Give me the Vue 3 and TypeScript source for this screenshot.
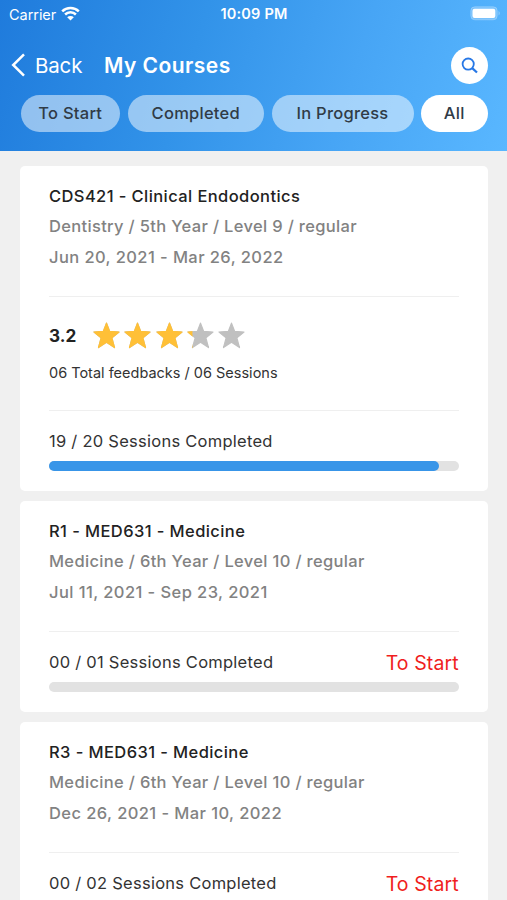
<script setup lang="ts">
interface Course {
  title: string
  meta: string
  dates: string
  rating?: number
  feedback?: string
  sessions: string
  progress: number
  status?: string
}

const filters = [
  { label: 'To Start', kind: 'start' },
  { label: 'Completed', kind: 'completed' },
  { label: 'In Progress', kind: 'progress' },
  { label: 'All', kind: 'all' },
]

const courses: Course[] = [
  {
    title: 'CDS421 - Clinical Endodontics',
    meta: 'Dentistry / 5th Year / Level 9 / regular',
    dates: 'Jun 20, 2021 - Mar 26, 2022',
    rating: 3.2,
    feedback: '06 Total feedbacks / 06 Sessions',
    sessions: '19 / 20 Sessions Completed',
    progress: 95,
  },
  {
    title: 'R1 - MED631 - Medicine',
    meta: 'Medicine / 6th Year / Level 10 / regular',
    dates: 'Jul 11, 2021 - Sep 23, 2021',
    sessions: '00 / 01 Sessions Completed',
    progress: 0,
    status: 'To Start',
  },
  {
    title: 'R3 - MED631 - Medicine',
    meta: 'Medicine / 6th Year / Level 10 / regular',
    dates: 'Dec 26, 2021 - Mar 10, 2022',
    sessions: '00 / 02 Sessions Completed',
    progress: 0,
    status: 'To Start',
  },
]

const starPath =
  'M13.5 1.1 L16.6 9.3 L26 10 L18.9 15.9 L21.5 25.6 L13.5 20.3 L5.5 25.6 L8.1 15.9 L1 10 L10.4 9.3 Z'

function starFill(rating: number, n: number): number {
  return Math.max(0, Math.min(1, rating - n + 1)) * 27
}
</script>

<template>
  <div class="screen">
    <header class="header">
      <div class="status">
        <div class="carrier">
          <span>Carrier</span>
          <svg class="wifi" width="19" height="15" viewBox="0 0 19 15">
            <path d="M1.2 5.4 A11.8 11.8 0 0 1 17.8 5.4" />
            <path d="M4.1 8.5 A7.6 7.6 0 0 1 14.9 8.5" />
            <path class="solid" d="M9.5 14.6 L6.2 11.3 A4.7 4.7 0 0 1 12.8 11.3 Z" />
          </svg>
        </div>
        <span class="clock">10:09 PM</span>
        <svg class="battery" width="31" height="15" viewBox="0 0 31 15">
          <rect x="0.8" y="0.8" width="26.4" height="13" rx="4" class="shell" />
          <rect x="2.5" y="2.7" width="22.8" height="9.4" rx="2" fill="#fff" />
          <path d="M28.6 5 Q30.8 7.2 28.6 9.6 Z" fill="#fff" fill-opacity="0.4" />
        </svg>
      </div>
      <nav class="navbar">
        <svg class="chevron" width="16" height="26" viewBox="0 0 16 26">
          <path d="M14 2.3 L3.2 13 L14 23.7" />
        </svg>
        <span class="back">Back</span>
        <h1 class="heading">My Courses</h1>
        <button class="search" aria-label="Search">
          <svg width="18" height="18" viewBox="0 0 18 18">
            <circle cx="7.2" cy="7.1" r="5.6" />
            <path d="M11.2 11.2 L16 15.5" class="handle" />
          </svg>
        </button>
      </nav>
      <div class="filters">
        <button v-for="f in filters" :key="f.kind" class="chip" :class="f.kind">{{ f.label }}</button>
      </div>
    </header>

    <main class="list">
      <article v-for="c in courses" :key="c.title" class="card">
        <h2 class="title">{{ c.title }}</h2>
        <p class="meta">{{ c.meta }}</p>
        <p class="dates">{{ c.dates }}</p>
        <section v-if="c.rating" class="feedback">
          <div class="rating">
            <span class="score">{{ c.rating }}</span>
            <svg v-for="n in 5" :key="n" class="star" width="27" height="27" viewBox="0 0 27 27">
              <clipPath :id="'fill-' + n">
                <rect x="0" y="0" :width="starFill(c.rating, n)" height="27" />
              </clipPath>
              <path :d="starPath" class="empty" />
              <path :d="starPath" class="full" :clip-path="'url(#fill-' + n + ')'" />
            </svg>
          </div>
          <p class="total">{{ c.feedback }}</p>
        </section>
        <div class="sessions">
          <span class="count">{{ c.sessions }}</span>
          <span v-if="c.status" class="state">{{ c.status }}</span>
        </div>
        <div class="track">
          <div v-if="c.progress" class="bar" :style="{ width: c.progress + '%' }"></div>
        </div>
      </article>
    </main>
  </div>
</template>

<style>
body {
  background: #f0f0f0;
  overflow: hidden;
}
</style>

<style scoped>
.screen {
  box-sizing: border-box;
  width: 507px;
  height: 900px;
  overflow: hidden;
  background: #f0f0f0;
  font-family: Inter, 'Liberation Sans', sans-serif;
  color: #333;
}
.header {
  box-sizing: border-box;
  height: 151.4px;
  background: linear-gradient(107deg, #1f7bdc 0%, #3293e9 38%, #47a5f5 68%, #59b7ff 100%);
}
.status {
  display: grid;
  grid-template-columns: 1fr auto 1fr;
  align-items: center;
  height: 28px;
  padding: 0 7px 0 9px;
  color: #fff;
  font-size: 14.5px;
}
.carrier {
  display: flex;
  align-items: center;
  gap: 5px;
  letter-spacing: -0.05px;
}
.wifi {
  margin-top: -2px;
  fill: none;
  stroke: #fff;
  stroke-width: 2.5;
}
.wifi .solid {
  fill: #fff;
  stroke: none;
}
.clock {
  margin: -1px 0 0 -1px;
  font-weight: 600;
  letter-spacing: 0.2px;
}
.battery {
  justify-self: end;
  margin: -1px -1px 0 0;
}
.shell {
  fill: #fff;
  fill-opacity: 0.22;
  stroke: #fff;
  stroke-opacity: 0.25;
}
.navbar {
  display: flex;
  align-items: center;
  height: 37px;
  margin-top: 19px;
  padding: 0 19px 0 10px;
  color: #fff;
}
.chevron {
  margin-top: -1px;
  fill: none;
  stroke: #fff;
  stroke-width: 2.5;
}
.back {
  width: 69px;
  margin-left: 9px;
  font-size: 20.5px;
  letter-spacing: -0.15px;
}
.heading {
  flex: 1;
  margin: 0;
  font-size: 21px;
  font-weight: 600;
  letter-spacing: 0.45px;
}
.search {
  display: grid;
  place-items: center;
  width: 37px;
  height: 37px;
  padding: 0;
  border: 0;
  border-radius: 50%;
  background: #fff;
}
.search svg {
  fill: none;
  stroke: #2778e6;
  stroke-width: 1.8;
}
.search .handle {
  stroke-width: 2.3;
}
.filters {
  display: flex;
  gap: 7.5px;
  margin-top: 11px;
  padding-left: 20.5px;
}
.chip {
  height: 37px;
  padding: 0 0 1px;
  border: 0;
  border-radius: 19px;
  background: rgba(255, 255, 255, 0.5);
  color: #303b46;
  font: 500 16.5px Inter, sans-serif;
  letter-spacing: 0.25px;
}
.chip.start {
  width: 99.5px;
}
.chip.completed {
  width: 136.5px;
}
.chip.progress {
  width: 142px;
}
.chip.all {
  width: 66.5px;
  background: #fff;
}
.list {
  display: flex;
  flex-direction: column;
  gap: 10px;
  padding: 14.6px 19.3px 0 20.3px;
}
.card {
  padding: 15px 28.5px 20px 28.7px;
  border-radius: 5px;
  background: #fff;
}
.title,
.meta,
.dates {
  margin: 0;
  font-size: 16.5px;
  font-weight: 500;
  white-space: nowrap;
}
.title {
  color: #222;
  line-height: 30px;
  letter-spacing: 0.41px;
}
.meta,
.dates {
  color: #828282;
}
.meta {
  line-height: 31px;
  letter-spacing: 0.33px;
}
.dates {
  padding-bottom: 23.5px;
  line-height: 30.5px;
  letter-spacing: 0.42px;
}
.feedback {
  box-sizing: border-box;
  height: 114px;
  padding-top: 25px;
  border-top: 1px solid #efefef;
}
.rating {
  display: flex;
  align-items: center;
  height: 27px;
}
.score {
  width: 44px;
  font-size: 17.2px;
  font-weight: 650;
  color: #222;
}
.star {
  margin-right: 4.3px;
  stroke-width: 1.2;
  stroke-linejoin: round;
}
.empty {
  fill: #c0c0c0;
  stroke: #c0c0c0;
}
.full {
  fill: #ffc037;
  stroke: #ffc037;
}
.total {
  margin: 13px 0 0;
  font-size: 14.5px;
  line-height: 22px;
  letter-spacing: 0;
}
.sessions {
  box-sizing: border-box;
  display: flex;
  align-items: center;
  justify-content: space-between;
  height: 51px;
  padding-top: 10px;
  border-top: 1px solid #efefef;
}
.count {
  font-size: 16.5px;
  letter-spacing: 0.26px;
}
.state {
  padding: 2px 0.5px 0 0;
  color: #f01e20;
  font-size: 19.5px;
  letter-spacing: 0.1px;
}
.track {
  height: 10px;
  border-radius: 5px;
  background: #e2e2e2;
}
.bar {
  height: 100%;
  border-radius: 5px;
  background: #3895e8;
}
</style>
